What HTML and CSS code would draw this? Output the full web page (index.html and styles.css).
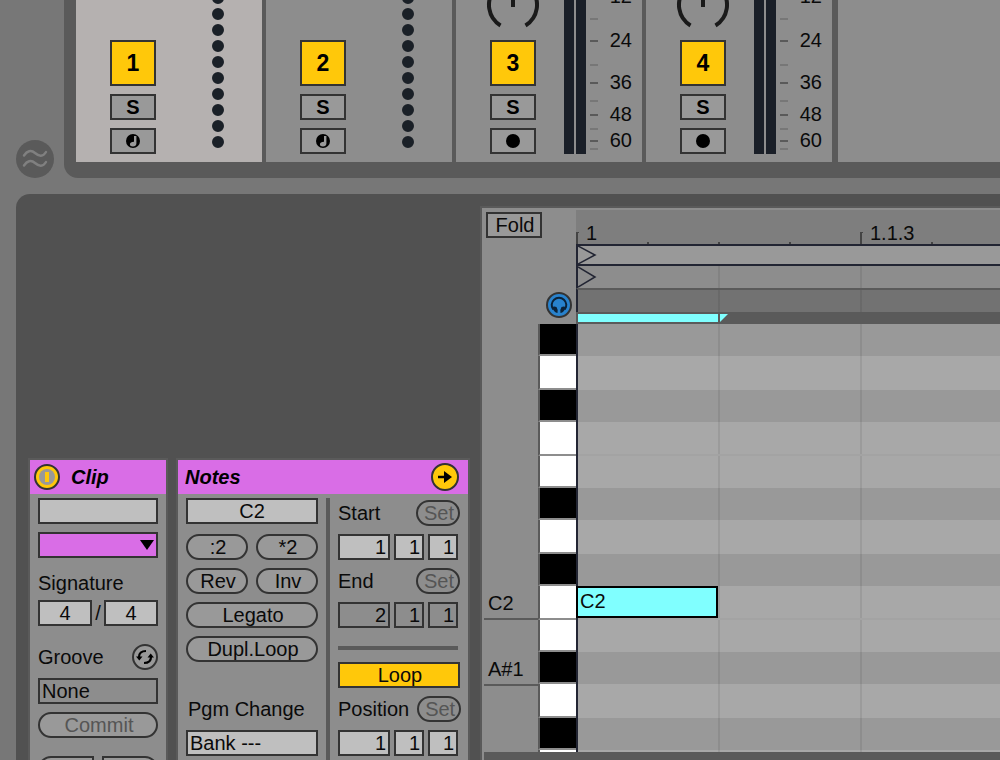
FILE: index.html
```
<!DOCTYPE html>
<html lang="en">
<head>
    <meta charset="UTF-8">
    <meta name="viewport" content="width=device-width, initial-scale=1.0">
    <title>Session Mixer / Clip View</title>
    <link rel="stylesheet" href="styles.css">
</head>
<body>
    <!-- shared drawings -->
    <svg class="defs" width="0" height="0" aria-hidden="true">
        <symbol id="knob" viewBox="0 0 54 32">
            <path d="M14.5 25.5A24 24 0 1 1 39.5 25.5M27 -12V7" fill="none" stroke="#1a1a1a" stroke-width="4"/>
        </symbol>
        <symbol id="midi" viewBox="0 0 14 14">
            <circle cx="7" cy="7" r="7" fill="#000"/>
            <path d="M8 2h2.400v7.400c0 1.800-1.500 3-3.500 3-1.800 0-3-.8-3-2 0-1.700 1.600-2.700 4.100-2.700z" fill="#999"/>
        </symbol>
        <symbol id="rec" viewBox="0 0 14 14">
            <circle cx="7" cy="7" r="7" fill="#000"/>
        </symbol>
        <symbol id="dots" viewBox="0 0 12 162">
            <path d="M6 -2V143" fill="none" stroke="#1a2027" stroke-width="12" stroke-linecap="round" stroke-dasharray="0.010 15.990"/>
        </symbol>
        <symbol id="ticks" viewBox="0 0 8 162">
            <path d="M0 41h8M0 83h8M0 115h8M0 141h8" stroke="#5a5a5a" stroke-width="2"/>
            <path d="M0 19h8M0 65h8M0 101h8M0 129h8M0 149h8" stroke="#777" stroke-width="2"/>
        </symbol>
    </svg>

    <section class="mixer-row">
        <button class="crossfade" aria-label="Show crossfader">
            <svg width="38" height="38" viewBox="0 0 38 38">
                <circle cx="19" cy="19" r="19" fill="#5a5a5a"/>
                <path d="M8 15.500C11 11 15 9.500 19 13S27 17 30 12M8 25.500C11 21 15 19.500 19 23S27 27 30 22" fill="none" stroke="#808080" stroke-width="2.400" stroke-linecap="round"/>
            </svg>
        </button>
        <div class="mixer">
            <div class="track selected">
                <div class="controls">
                    <button class="activator">1</button>
                    <button class="small">S</button>
                    <button class="small" aria-label="Arm track 1"><svg width="14" height="14"><use href="#midi"/></svg></button>
                </div>
                <svg class="dots" width="12" height="162"><use href="#dots"/></svg>
            </div>
            <div class="track">
                <div class="controls">
                    <button class="activator">2</button>
                    <button class="small">S</button>
                    <button class="small" aria-label="Arm track 2"><svg width="14" height="14"><use href="#midi"/></svg></button>
                </div>
                <svg class="dots" width="12" height="162"><use href="#dots"/></svg>
            </div>
            <div class="track">
                <div class="controls">
                    <svg class="knob" width="54" height="32"><use href="#knob"/></svg>
                    <button class="activator">3</button>
                    <button class="small">S</button>
                    <button class="small" aria-label="Arm track 3"><svg width="14" height="14"><use href="#rec"/></svg></button>
                </div>
                <div class="meter"><i></i><i></i></div>
                <svg class="scale" width="42" height="162">
                    <use href="#ticks" width="8" height="162"/>
                    <text x="42" y="3">12</text>
                    <text x="42" y="47">24</text>
                    <text x="42" y="89">36</text>
                    <text x="42" y="121">48</text>
                    <text x="42" y="147">60</text>
                </svg>
            </div>
            <div class="track">
                <div class="controls">
                    <svg class="knob" width="54" height="32"><use href="#knob"/></svg>
                    <button class="activator">4</button>
                    <button class="small">S</button>
                    <button class="small" aria-label="Arm track 4"><svg width="14" height="14"><use href="#rec"/></svg></button>
                </div>
                <div class="meter"><i></i><i></i></div>
                <svg class="scale" width="42" height="162">
                    <use href="#ticks" width="8" height="162"/>
                    <text x="42" y="3">12</text>
                    <text x="42" y="47">24</text>
                    <text x="42" y="89">36</text>
                    <text x="42" y="121">48</text>
                    <text x="42" y="147">60</text>
                </svg>
            </div>
            <div class="empty-area"></div>
        </div>
    </section>

    <main class="detail">
        <div class="inspector">
            <section class="box clip-box">
                <header>
                    <button class="icon-btn" aria-label="Clip activator">
                        <svg width="26" height="26" viewBox="0 0 26 26">
                            <circle cx="13" cy="13" r="12" fill="#ffc80a" stroke="#333" stroke-width="2"/>
                            <circle cx="13" cy="13" r="8" fill="#999"/>
                            <path d="M13 8v10" stroke="#ffc80a" stroke-width="4"/>
                        </svg>
                    </button>
                    <h2>Clip</h2>
                </header>
                <div class="fields">
                    <input class="field" type="text" aria-label="Clip name">
                    <div class="color-pick">
                        <select class="field" aria-label="Clip color"><option></option></select>
                        <svg width="14" height="10" viewBox="0 0 14 10"><path d="M0 0h14L7 10z"/></svg>
                    </div>
                    <label class="label low" for="sig-num">Signature</label>
                    <div class="row signature">
                        <input class="field center" id="sig-num" type="text" value="4">
                        <span>/</span>
                        <input class="field center" type="text" value="4" aria-label="Signature denominator">
                    </div>
                    <div class="row spaced">
                        <label class="label" for="groove">Groove</label>
                        <button class="icon-btn" aria-label="Hot-swap groove">
                            <svg width="26" height="26" viewBox="0 0 26 26">
                                <circle cx="13" cy="13" r="12" fill="#999" stroke="#333" stroke-width="2"/>
                                <path d="M14 7C9.500 7 7 9.500 7 13M12 19C16.500 19 19 16.500 19 13" fill="none" stroke="#000" stroke-width="2.200"/>
                                <path d="M4 12.500h6.500L7.300 16.500zM22 13.500h-6.500L18.700 9.500z"/>
                            </svg>
                        </button>
                    </div>
                    <select class="field flat" id="groove"><option>None</option></select>
                    <button class="pill dim">Commit</button>
                    <div class="row halves spaced">
                        <button class="pill left" aria-label="Halve tempo"></button>
                        <button class="pill right" aria-label="Double tempo"></button>
                    </div>
                </div>
            </section>

            <section class="box notes-box">
                <header>
                    <h2>Notes</h2>
                    <button class="icon-btn" aria-label="Show notes">
                        <svg width="28" height="28" viewBox="0 0 28 28">
                            <circle cx="14" cy="14" r="13" fill="#ffc80a" stroke="#333" stroke-width="2"/>
                            <path d="M7 12.800h6V8l8 6-8 6v-4.800H7z"/>
                        </svg>
                    </button>
                </header>
                <div class="notes-body">
                    <div class="fields tools">
                        <input class="field center" type="text" value="C2" aria-label="Note range">
                        <div class="row halves first">
                            <button class="pill">:2</button>
                            <button class="pill">*2</button>
                        </div>
                        <div class="row halves">
                            <button class="pill">Rev</button>
                            <button class="pill">Inv</button>
                        </div>
                        <button class="pill">Legato</button>
                        <button class="pill">Dupl.Loop</button>
                        <label class="label pgm" for="bank">Pgm Change</label>
                        <select class="field" id="bank"><option>Bank ---</option></select>
                    </div>
                    <div class="fields range">
                        <div class="row between">
                            <label class="label" for="start">Start</label>
                            <button class="pill set">Set</button>
                        </div>
                        <div class="row position">
                            <input class="field" id="start" type="text" value="1">
                            <input class="field" type="text" value="1" aria-label="Start beat">
                            <input class="field" type="text" value="1" aria-label="Start sixteenth">
                        </div>
                        <div class="row between">
                            <label class="label" for="end">End</label>
                            <button class="pill set">Set</button>
                        </div>
                        <div class="row position">
                            <input class="field flat" id="end" type="text" value="2">
                            <input class="field flat" type="text" value="1" aria-label="End beat">
                            <input class="field flat" type="text" value="1" aria-label="End sixteenth">
                        </div>
                        <hr>
                        <button class="loop">Loop</button>
                        <div class="row between">
                            <label class="label" for="position">Position</label>
                            <button class="pill set">Set</button>
                        </div>
                        <div class="row position">
                            <input class="field" id="position" type="text" value="1">
                            <input class="field" type="text" value="1" aria-label="Position beat">
                            <input class="field" type="text" value="1" aria-label="Position sixteenth">
                        </div>
                    </div>
                </div>
            </section>
        </div>

        <section class="roll">
            <div class="roll-head">
                <div class="corner">
                    <button class="fold">Fold</button>
                    <button class="icon-btn preview" aria-label="Preview notes">
                        <svg width="26" height="26" viewBox="0 0 26 26">
                            <circle cx="13" cy="13" r="12" fill="#2882cd" stroke="#333" stroke-width="2"/>
                            <path d="M7.200 17.500A7.300 7.300 0 1 1 18.800 17.500" fill="none" stroke="#0b2238" stroke-width="2"/>
                            <path d="M5.800 15q2.400-1 4.700 0 1.700 2.500 1 6-3.500-.5-5.700-6zM20.200 15q-2.400-1-4.700 0-1.700 2.500-1 6 3.500-.5 5.700-6z" fill="#0b2238"/>
                        </svg>
                    </button>
                </div>
                <div class="timeline">
                    <div class="ruler"><span>1</span><span>1.1.3</span></div>
                    <div class="marker-row start"><svg width="20" height="18" viewBox="0 0 20 18"><path d="M0 0L17 9L0 18"/></svg></div>
                    <div class="marker-row end"><svg width="20" height="22" viewBox="0 0 20 22"><path d="M0 1L17 11L0 21"/></svg></div>
                    <div class="shade-row"></div>
                    <div class="loop-row">
                        <div class="loop-bar"></div>
                        <svg width="8" height="8" viewBox="0 0 8 8"><path d="M0 0h8L0 8z" fill="#80ffff"/></svg>
                    </div>
                </div>
            </div>
            <div class="keys">
                <div class="key-row black"><span></span><i></i><div class="lane"></div></div>
                <div class="key-row"><span></span><i></i><div class="lane"></div></div>
                <div class="key-row black"><span></span><i></i><div class="lane"></div></div>
                <div class="key-row joined"><span></span><i></i><div class="lane"></div></div>
                <div class="key-row short"><span></span><i></i><div class="lane"></div></div>
                <div class="key-row black"><span></span><i></i><div class="lane"></div></div>
                <div class="key-row"><span></span><i></i><div class="lane"></div></div>
                <div class="key-row black"><span></span><i></i><div class="lane"></div></div>
                <div class="key-row joined"><span class="named">C2</span><i></i><div class="lane"><div class="note">C2</div></div></div>
                <div class="key-row short"><span></span><i></i><div class="lane"></div></div>
                <div class="key-row black"><span class="named">A#1</span><i></i><div class="lane"></div></div>
                <div class="key-row"><span></span><i></i><div class="lane"></div></div>
                <div class="key-row black"><span></span><i></i><div class="lane"></div></div>
                <div class="key-row"><span></span><i></i><div class="lane"></div></div>
            </div>
            <div class="roll-foot"></div>
        </section>
    </main>
</body>
</html>
```
FILE: styles.css
```
* {
    box-sizing: border-box;
}
body {
    margin: 0;
    height: 100vh;
    display: flex;
    flex-direction: column;
    gap: 16px;
    overflow: hidden;
    background: #777;
    color: #0a0a0a;
    font: 20px/22px "Liberation Sans", Arial, sans-serif;
}
button, input, select {
    font: inherit;
    color: inherit;
    margin: 0;
    padding: 0;
    border-radius: 0;
}
button {
    display: flex;
    align-items: center;
    justify-content: center;
    border: 2px solid #333;
    background: #999;
}
svg {
    display: block;
    flex: none;
}
.defs {
    position: absolute;
}

/* mixer */
.mixer-row {
    display: flex;
    align-items: flex-end;
    flex: none;
    padding-left: 16px;
    gap: 10px;
}
.crossfade, .icon-btn {
    border: none;
    background: none;
    flex: none;
}
.mixer {
    flex: 1;
    display: flex;
    gap: 4px;
    background: #5a5a5a;
    padding: 0 0 16px 12px;
    border-bottom-left-radius: 14px;
}
.track {
    width: 186px;
    height: 162px;
    flex: none;
    display: flex;
    padding-left: 34px;
    background: #8d8d8d;
}
.track.selected {
    background: #b5b1b0;
}
.empty-area {
    flex: 1;
    margin-left: 2px;
    background: #8d8d8d;
}
.controls {
    width: 46px;
    display: flex;
    flex-direction: column;
    justify-content: flex-end;
    align-items: center;
    gap: 8px;
    padding-bottom: 8px;
}
.controls button {
    width: 46px;
    font-weight: bold;
    color: #000;
}
.controls .activator {
    height: 46px;
    background: #ffc80a;
    font-size: 23px;
}
.small {
    height: 26px;
}
.dots {
    margin-left: 56px;
}
.meter {
    display: flex;
    gap: 2px;
    margin: 0 4px 8px 28px;
}
.meter i {
    width: 10px;
    background: #1a1f28;
}
.scale text {
    text-anchor: end;
    fill: #0a0a0a;
}

/* detail view */
.detail {
    flex: 1;
    min-height: 0;
    display: flex;
    gap: 10px;
    margin-left: 16px;
    padding: 12px 0 0 12px;
    background: #515151;
    border-top-left-radius: 14px;
}
.inspector {
    flex: none;
    display: flex;
    gap: 8px;
    margin-top: 252px;
}
.box {
    border: 2px solid #5a5a5a;
    border-bottom: none;
    background: #8d8d8d;
    overflow: hidden;
}
.box header {
    display: flex;
    align-items: center;
    height: 34px;
    background: #d96de6;
}
.box h2 {
    margin: 0;
    font-size: 20px;
    font-style: italic;
    color: #000;
}
.clip-box {
    width: 140px;
}
.clip-box header {
    padding-left: 4px;
    gap: 11px;
}
.notes-box {
    width: 294px;
}
.notes-box header {
    justify-content: space-between;
    padding: 0 9px 0 7px;
}
.fields {
    display: flex;
    flex-direction: column;
    gap: 8px;
    padding: 4px 8px 0;
}
.field {
    width: 100%;
    height: 26px;
    flex: none;
    border: 2px solid #333;
    background: #bfbfbf;
    padding: 0 2px;
    appearance: none;
    outline: none;
}
.center {
    text-align: center;
}
.flat {
    background: #8d8d8d;
}
.color-pick {
    position: relative;
}
.color-pick .field {
    display: block;
    background: #d96de6;
}
.color-pick svg {
    position: absolute;
    right: 4px;
    top: 8px;
}
.label {
    height: 26px;
    line-height: 26px;
    flex: none;
}
.low {
    line-height: 34px;
}
.row {
    display: flex;
    align-items: center;
    height: 26px;
    flex: none;
    gap: 8px;
}
.spaced {
    margin-top: 10px;
    justify-content: space-between;
}
.signature {
    gap: 0;
    justify-content: space-between;
}
.signature .field {
    width: 54px;
}
.pill {
    height: 26px;
    flex: none;
    border-radius: 13px;
    padding-left: 2px;
}
.dim, .set {
    color: #555;
}
.halves .pill {
    flex: 1;
}
.pill.left {
    border-radius: 13px 0 0 13px;
}
.pill.right {
    border-radius: 0 13px 13px 0;
}
.notes-body {
    display: flex;
}
.tools {
    width: 148px;
}
.tools .first {
    margin-top: 2px;
}
.pgm {
    margin-top: 26px;
    padding-left: 2px;
}
.range {
    width: 142px;
    margin-top: 4px;
    padding-top: 2px;
    border-left: 4px solid #5a5a5a;
    height: 400px;
}
.between {
    width: 122px;
    justify-content: space-between;
}
.set {
    width: 44px;
    background: #8d8d8d;
}
.position {
    width: 120px;
    gap: 4px;
}
.position .field {
    width: 30px;
    text-align: right;
}
.position .field:first-child {
    width: 52px;
}
.range hr {
    width: 120px;
    height: 4px;
    flex: none;
    margin: 10px 0 4px;
    border: none;
    background: #5a5a5a;
}
.loop {
    width: 122px;
    height: 26px;
    flex: none;
    background: #ffc80a;
    padding-left: 2px;
}

/* piano roll */
.roll {
    flex: 1;
    min-width: 0;
    display: flex;
    flex-direction: column;
    border: solid #5a5a5a;
    border-width: 2px 0 0 2px;
    background: #8d8d8d;
}
.roll-head {
    display: flex;
    flex: none;
}
.corner {
    width: 94px;
    flex: none;
    display: flex;
    flex-direction: column;
    justify-content: space-between;
    padding: 4px 4px 6px;
}
.fold {
    width: 56px;
    height: 26px;
    padding-left: 2px;
}
.preview {
    align-self: flex-end;
}
.timeline {
    flex: 1;
    min-width: 0;
    padding-top: 2px;
}
.ruler {
    display: flex;
    height: 34px;
    overflow: hidden;
    padding-top: 22px;
    background:
        repeating-linear-gradient(to right, #444 0 2px, transparent 2px 71px) 0 100% / 100% 2px no-repeat,
        #7e7e7e;
}
.ruler span {
    width: 284px;
    flex: none;
    height: 12px;
    line-height: 2px;
    padding-left: 8px;
    border-left: 2px solid #444;
    background: linear-gradient(#444, #444) 0 0 / 1px 1px no-repeat;
}
.marker-row, .shade-row {
    border-left: 2px solid #222533;
}
.marker-row path {
    fill: none;
    stroke: #222533;
    stroke-width: 1.5;
}
.start {
    height: 22px;
    border-top: 2px solid #222533;
    border-bottom: 2px solid #222533;
    background: #999;
}
.end, .shade-row, .lane {
    background-image: repeating-linear-gradient(to right, transparent 0 140px, rgba(0, 0, 0, 0.08) 140px 142px);
}
.end {
    height: 22px;
}
.shade-row {
    height: 24px;
    border-top: 2px solid #5a5a5a;
    background-color: #727272;
}
.loop-row {
    display: flex;
    gap: 2px;
    height: 12px;
    padding: 2px 0 2px 2px;
    background: #5a5a5a;
}
.loop-bar {
    width: 140px;
    background: #80ffff;
}
.keys {
    flex: 1;
    min-height: 0;
    overflow: hidden;
}
.key-row {
    display: flex;
    height: 34px;
}
.key-row.black, .key-row.short {
    height: 32px;
}
.key-row span {
    width: 54px;
    height: 34px;
    flex: none;
    margin-left: 2px;
    padding-left: 4px;
    line-height: 34px;
}
.key-row .named {
    border-bottom: 2px solid #5a5a5a;
}
.key-row i {
    width: 38px;
    flex: none;
    border-left: 2px solid #5a5a5a;
    border-bottom: 2px solid #8d8d8d;
    background: #fff;
}
.key-row.black i {
    background: #000;
}
.lane {
    position: relative;
    flex: 1;
    border-left: 2px solid #222533;
    background-color: #a8a8a8;
}
.black .lane {
    background-color: #999;
}
.joined .lane {
    box-shadow: inset 0 -2px #a3a3a3;
}
.note {
    position: absolute;
    left: -2px;
    top: 0;
    width: 142px;
    height: 32px;
    padding-left: 2px;
    line-height: 26px;
    border: 2px solid #000;
    background: #80ffff;
}
.roll-foot {
    height: 8px;
    flex: none;
    margin-left: 2px;
    background: #5a5a5a;
}
```
